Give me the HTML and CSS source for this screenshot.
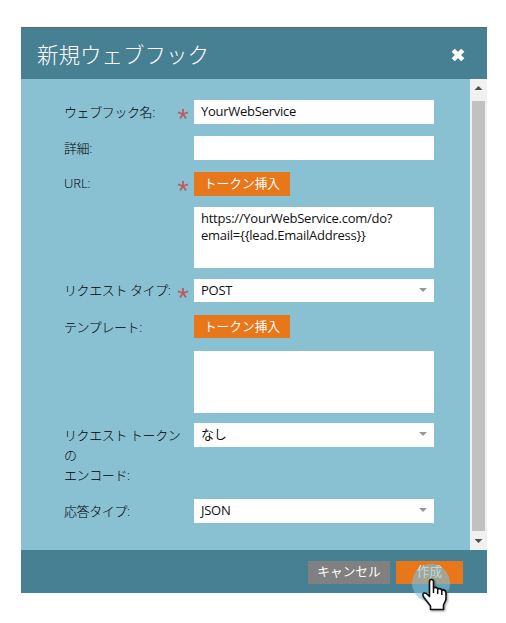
FILE: index.html
```html
<!DOCTYPE html>
<html lang="ja">
<head>
<meta charset="utf-8">
<title>新規ウェブフック</title>
<link rel="stylesheet" href="styles.css">
</head>
<body>
<div class="dialog">
  <header class="header">
    <h1 class="title">新規ウェブフック</h1>
    <svg class="close" width="14" height="14" viewBox="0 0 14 14"><path d="M2.2 2.2 11.8 11.8M11.8 2.2 2.2 11.8" stroke="#fff" stroke-width="4.4"/></svg>
  </header>
  <div class="body">
    <div class="form">
      <div class="row row-name"><div class="label">ウェブフック名:</div><svg class="star" viewBox="0 0 12 12"><path d="M6 6V1M6 6 1 4.4M6 6l5-1.6M6 6 3 10.5M6 6l3 4.5"/></svg><div class="field">YourWebService</div></div>
      <div class="row row-detail"><div class="label">詳細:</div><div class="field"></div></div>
      <div class="row row-url"><div class="label latin">URL:</div><svg class="star" viewBox="0 0 12 12"><path d="M6 6V1M6 6 1 4.4M6 6l5-1.6M6 6 3 10.5M6 6l3 4.5"/></svg><div class="stack"><div class="button">トークン挿入</div><div class="area">https://YourWebService.com/do?<br>email={{lead.EmailAddress}}</div></div></div>
      <div class="row row-type"><div class="label">リクエスト タイプ:</div><svg class="star" viewBox="0 0 12 12"><path d="M6 6V1M6 6 1 4.4M6 6l5-1.6M6 6 3 10.5M6 6l3 4.5"/></svg><div class="field select">POST</div></div>
      <div class="row row-template"><div class="label">テンプレート:</div><div class="stack"><div class="button">トークン挿入</div><div class="area"></div></div></div>
      <div class="row row-encode"><div class="label">リクエスト トークン<br>の<br>エンコード:</div><div class="field select">なし</div></div>
      <div class="row row-response"><div class="label">応答タイプ:</div><div class="field select">JSON</div></div>
    </div>
    <div class="scrollbar">
      <svg width="17" height="22" viewBox="0 0 17 22"><path d="M4.5 11 8.5 7l4 4z" fill="#505050"/></svg>
      <div class="thumb"></div>
      <svg width="17" height="19" viewBox="0 0 17 19"><path d="M4.5 8h8l-4 4z" fill="#505050"/></svg>
    </div>
  </div>
  <footer class="footer">
    <div class="button cancel">キャンセル</div>
    <div class="button create">作成</div>
  </footer>
</div>
<svg class="pointer" width="50" height="56" viewBox="0 0 50 56">
  <circle cx="21" cy="23" r="19" fill="#79c2df" fill-opacity=".6"/>
  <path class="hand" d="M19.5 21.5q0-2 2-2t2 2v6.5q3-1.5 4.2.8 3-.8 4.1 1.2 3.5-.6 4.2 2.5v7l-2.5 5.5v4.5H20.5V46L14 37.5q-2.2-3.5 0-4.5 1.8-.4 3.5 1.5l2 2z"/>
  <path d="M23.5 28v5M27.7 28.8V34M31.8 30v5" fill="none" stroke="#111" stroke-width="1.5"/>
</svg>
</body>
</html>
```
FILE: styles.css
```css
* { box-sizing: border-box; }
body {
  margin: 0;
  padding: 27px 19px 30px 21px;
  background: #fff;
  font: 13px/17px "Open Sans", "Noto Sans CJK JP", sans-serif;
  color: #111;
}
.dialog { width: 466px; height: 566px; display: flex; flex-direction: column; }
.header {
  height: 52px;
  padding: 2px 22px 0 16px;
  border-top: 1px solid #5b6770;
  background: #468092;
  display: flex;
  align-items: center;
  justify-content: space-between;
}
.title { margin: 0; font-size: 21.5px; line-height: 30px; font-weight: 300; color: #fff; }
.close { margin-top: 1px; }
.body { height: 471px; display: flex; background: #89c1d3; }
.form { width: 449px; padding: 21px 36px 0 43px; }
.row { display: grid; grid-template-columns: 114px 16px 240px; align-items: start; }
.label { grid-column: 1; white-space: nowrap; line-height: 20px; padding-top: 2px; font-weight: 300; letter-spacing: -.4px; color: #000; }
.latin { padding-top: 1px; letter-spacing: -.1px; }
.star { grid-row: 1; grid-column: 2; width: 12px; height: 12px; margin: 8px 0 0 -1px; fill: none; stroke: #bc5961; stroke-width: 1.8; }
.field, .stack { grid-column: 3; grid-row: 1; }
.field { height: 24px; padding: 3px 7px; background: #fff; letter-spacing: -.26px; }
.area { height: 61px; margin-top: 11px; padding: 3px 7px; background: #fff; letter-spacing: -.25px; }
.button { width: 96px; height: 24px; line-height: 23px; text-align: center; background: #e8761a; color: #fff; font-size: 12.7px; }
.select { display: flex; justify-content: space-between; }
.select::after { content: ""; border: 4px solid transparent; border-top-color: #999; border-bottom: 0; margin-top: 6px; }
.row-detail, .row-url { margin-top: 12px; }
.row-type { margin-top: 11px; }
.row-type .field { height: 23px; }
.row-type .label { padding-top: 1px; }
.row-template { margin-top: 13px; }
.row-template .button { height: 23px; }
.row-template .area { height: 62px; margin-top: 13px; }
.row-encode { margin-top: 10px; height: 64px; }
.row-response { margin-top: 12px; }
.scrollbar { width: 17px; background: #f1f1f1; display: flex; flex-direction: column; align-items: center; }
.thumb { width: 13px; height: 430px; background: #c1c1c1; }
.footer { height: 43px; padding: 11px 24px 0 0; background: #468092; display: flex; justify-content: flex-end; gap: 6px; }
.footer .button { height: 23px; line-height: 20px; }
.footer .cancel { width: 82px; background: #808080; }
.footer .create { width: 67px; }
.pointer { position: absolute; left: 410px; top: 560px; }
.hand { fill: #fff; stroke: #111; stroke-width: 1.6; stroke-linejoin: round; filter: drop-shadow(1px 1px 1px rgba(0, 0, 0, .4)); }
```
